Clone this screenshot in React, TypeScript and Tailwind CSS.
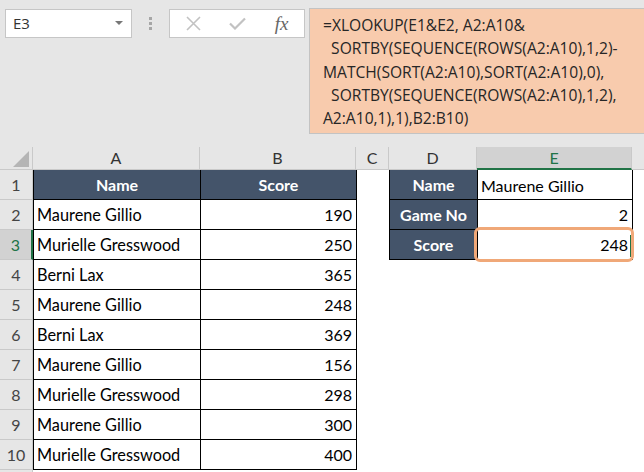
import React from "react";

const data: [string, number][] = [
  ["Maurene Gillio", 190],
  ["Murielle Gresswood", 250],
  ["Berni Lax", 365],
  ["Maurene Gillio", 248],
  ["Berni Lax", 369],
  ["Maurene Gillio", 156],
  ["Murielle Gresswood", 298],
  ["Maurene Gillio", 300],
  ["Murielle Gresswood", 400],
];

const cellFont = { fontFamily: "Lato, 'Liberation Sans', sans-serif" };

function RowHead({ n, selected }: { n: number | string; selected?: boolean }) {
  return (
    <div
      className={
        "w-[33px] shrink-0 flex items-center justify-center border-b border-[#c9c9c9] text-[16px] " +
        (selected
          ? "bg-[#d2d2d2] text-[#217346] border-r-2 border-r-[#217346]"
          : "bg-[#e6e6e6] text-[#444] border-r border-r-[#c9c9c9]")
      }
    >
      {n}
    </div>
  );
}

function ColHead({
  label,
  w,
  selected,
}: {
  label: string;
  w: string;
  selected?: boolean;
}) {
  return (
    <div
      className={
        w +
        " shrink-0 flex items-center justify-center text-[16px] border-r border-[#c9c9c9] " +
        (selected
          ? "bg-[#d2d2d2] text-[#217346] border-b-2 border-b-[#217346]"
          : "bg-[#e6e6e6] text-[#333] border-b border-b-[#c9c9c9]")
      }
    >
      {label}
    </div>
  );
}

function FormulaTools() {
  return (
    <div className="flex items-start pt-[9px] pl-[5px]">
      <div className="w-[127px] h-[29px] bg-white border border-[#c6c6c6] flex items-center pl-[7px] pr-[8px]">
        <span className="text-[15px] text-[#333] flex-1" style={{ fontFamily: "'Open Sans', sans-serif" }}>
          E3
        </span>
        <svg width="8" height="5" viewBox="0 0 8 5">
          <path d="M0 0 L8 0 L4 4 Z" fill="#777" />
        </svg>
      </div>
      <div className="w-[37px] h-[29px] flex flex-col items-center justify-center gap-[2px]">
        <div className="w-[3px] h-[3px] bg-[#a6a6a6]" />
        <div className="w-[3px] h-[3px] bg-[#a6a6a6]" />
        <div className="w-[3px] h-[3px] bg-[#a6a6a6]" />
      </div>
      <div className="w-[136px] h-[29px] bg-white border border-[#c6c6c6] flex items-center">
        <div className="w-[45px] flex justify-center pl-[2px]">
          <svg width="15" height="15" viewBox="0 0 15 15">
            <path d="M1 1 L14 14 M14 1 L1 14" stroke="#c2c2c2" strokeWidth="1.6" />
          </svg>
        </div>
        <div className="w-[45px] flex justify-center">
          <svg width="17" height="13" viewBox="0 0 17 13">
            <path d="M1 6.5 L6 11.5 L16 1.5" stroke="#c2c2c2" strokeWidth="2.2" fill="none" />
          </svg>
        </div>
        <div className="w-[45px] flex justify-center">
          <span
            className="italic text-[19px] text-[#666] leading-none"
            style={{ fontFamily: "'Liberation Serif', serif" }}
          >
            fx
          </span>
        </div>
      </div>
    </div>
  );
}

export default function App() {
  const lines = [
    "=XLOOKUP(E1&E2, A2:A10&",
    "  SORTBY(SEQUENCE(ROWS(A2:A10),1,2)-",
    "MATCH(SORT(A2:A10),SORT(A2:A10),0),",
    "  SORTBY(SEQUENCE(ROWS(A2:A10),1,2),",
    "A2:A10,1),1),B2:B10)",
  ];
  return (
    <div className="w-[644px] h-[472px] overflow-hidden bg-white" style={cellFont}>
      {/* formula bar area */}
      <div className="h-[147px] bg-[#e6e6e6] flex">
        <FormulaTools />
        <div className="flex-1 pt-[8px] pl-[4px]">
          <div
            className="h-[126px] bg-[#f8cbad] border border-[#c3c3c3] border-r-0 pl-[13px] pt-[5px] text-[15.6px] leading-[23.3px] text-[#262626]"
            style={{ fontFamily: "'Open Sans', sans-serif" }}
          >
            {lines.map((l, i) => (
              <div key={i} className="whitespace-pre">
                {l}
              </div>
            ))}
          </div>
        </div>
      </div>

      {/* column headers */}
      <div className="flex h-[23px]">
        <div className="w-[33px] shrink-0 bg-[#e6e6e6] border-r border-b border-[#c9c9c9] flex items-end justify-end pr-[3px] pb-[2px]">
          <svg width="16" height="16" viewBox="0 0 16 16">
            <path d="M16 0 L16 16 L0 16 Z" fill="#b5b5b5" />
          </svg>
        </div>
        <ColHead label="A" w="w-[167px]" />
        <ColHead label="B" w="w-[156px]" />
        <ColHead label="C" w="w-[33px]" />
        <ColHead label="D" w="w-[88px]" />
        <ColHead label="E" w="w-[155px]" selected />
        <div className="flex-1 bg-[#e6e6e6] border-b border-[#c9c9c9]" />
      </div>

      {/* row 1 */}
      <div className="flex h-[30px]">
        <RowHead n={1} />
        <div className="w-[167px] shrink-0 bg-[#44546a] border-l border-b border-black flex items-center justify-center text-white font-bold text-[16px]">
          Name
        </div>
        <div className="w-[157px] shrink-0 bg-[#44546a] border-x border-b border-black flex items-center justify-center text-white font-bold text-[16px]">
          Score
        </div>
        <div className="w-[32px] shrink-0" />
        <div className="w-[88px] shrink-0 bg-[#44546a] border-l border-b border-black flex items-center justify-center text-white font-bold text-[16px]">
          Name
        </div>
        <div className="w-[156px] shrink-0 border-x border-b border-black flex items-center pl-[3px] pt-[3px] text-[16px] text-black">
          Maurene Gillio
        </div>
        <div className="flex-1" />
      </div>

      {data.map(([name, score], i) => {
        const r = i + 2;
        return (
          <div key={r} className="flex h-[30px]">
            <RowHead n={r} selected={r === 3} />
            <div className="w-[167px] shrink-0 border-l border-b border-black flex items-center pl-[3px] pt-[2px] text-[16.3px] text-black">
              {name}
            </div>
            <div className="w-[157px] shrink-0 border-x border-b border-black flex items-end justify-end pr-[4px] pb-[2px] text-[16px] text-black">
              {score}
            </div>
            <div className="w-[32px] shrink-0" />
            {r === 2 && (
              <>
                <div className="w-[88px] shrink-0 bg-[#44546a] border-l border-b border-black flex items-center justify-center text-white font-bold text-[16px]">
                  Game No
                </div>
                <div className="w-[156px] shrink-0 border-x border-b border-black flex items-end justify-end pr-[4px] pb-[2px] text-[16px] text-black">
                  2
                </div>
              </>
            )}
            {r === 3 && (
              <>
                <div className="w-[88px] shrink-0 bg-[#44546a] border-l border-b border-black flex items-center justify-center text-white font-bold text-[16px]">
                  Score
                </div>
                <div className="relative w-[156px] shrink-0 border-x border-b border-black flex items-end justify-end pr-[4px] pb-[2px] text-[16px] text-black">
                  248
                  <div className="absolute right-[1px] bottom-[2px] w-[1px] h-[22px] bg-[#217346]" />
                  <div className="absolute -left-[4px] -right-[2px] -top-[3px] -bottom-[3px] border-[3px] border-[#f0a878] rounded-[6px]" />
                </div>
              </>
            )}
            <div className="flex-1" />
          </div>
        );
      })}
      <div className="flex h-[10px]">
        <RowHead n="" />
        <div className="flex-1" />
      </div>
    </div>
  );
}
